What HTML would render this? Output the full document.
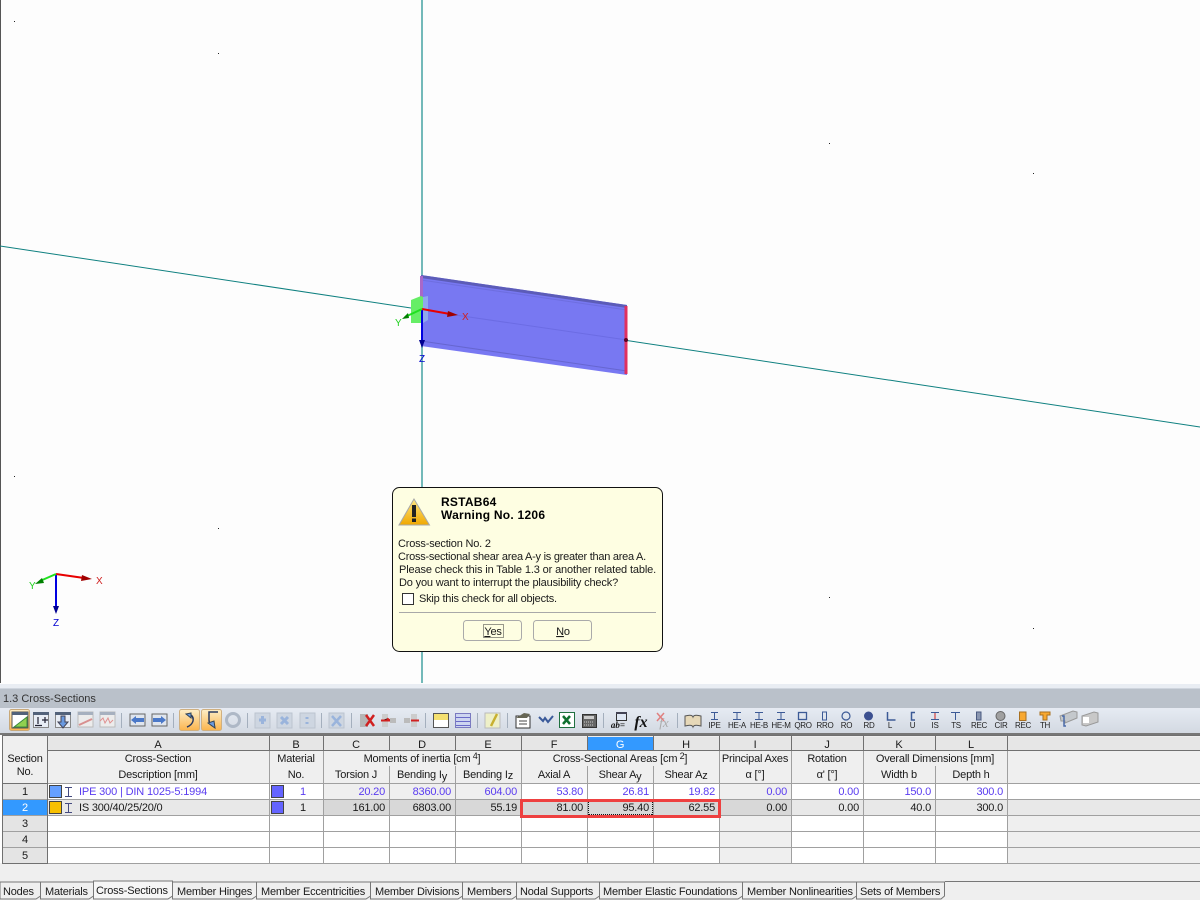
<!DOCTYPE html>
<html><head><meta charset="utf-8"><style>
html,body{margin:0;padding:0;background:#fff;width:1200px;height:900px;overflow:hidden}
svg{display:block;position:absolute;left:0;top:0}
text{font-family:"Liberation Sans",sans-serif;font-size:11px;letter-spacing:-.2px;fill:#1a1a1a}
.m{text-anchor:middle}.e{text-anchor:end}
.b{fill:#5a3cf0}
.t{font-size:8px;letter-spacing:-.3px;text-anchor:middle;fill:#222}
.tab{fill:#efefef;stroke:#777;stroke-width:1}
.ax{font-size:10px;letter-spacing:0}
</style></head><body>
<svg width="1200" height="900" viewBox="0 0 1200 900">
<defs>
<linearGradient id="tb" x1="0" y1="0" x2="0" y2="1"><stop offset="0" stop-color="#e6ebf3"/><stop offset="1" stop-color="#d3d9e2"/></linearGradient>
<linearGradient id="or" x1="0" y1="0" x2="0" y2="1"><stop offset="0" stop-color="#fdeec8"/><stop offset="1" stop-color="#fbb44c"/></linearGradient>
<linearGradient id="yl" x1="0" y1="0" x2="0" y2="1"><stop offset="0" stop-color="#ffe680"/><stop offset="1" stop-color="#f0a800"/></linearGradient>
</defs>
<!-- viewport -->
<rect width="1200" height="684" fill="#fdfdfd"/>
<rect x="0" y="0" width="1" height="683" fill="#555"/>
<line x1="422" y1="0" x2="422" y2="683" stroke="#73b9b9" stroke-width="2"/>
<line x1="0" y1="246" x2="421" y2="309.5" stroke="#0f8080" stroke-width="1"/>
<line x1="627" y1="340.500" x2="1200" y2="427" stroke="#0f8080" stroke-width="1"/>
<g fill="#222"><rect x="14" y="21" width="1" height="1"/><rect x="218" y="53" width="1" height="1"/><rect x="829" y="143" width="1" height="1"/><rect x="1033" y="173" width="1" height="1"/><rect x="14" y="476" width="1" height="1"/><rect x="218" y="528" width="1" height="1"/><rect x="829" y="597" width="1" height="1"/><rect x="1033" y="628" width="1" height="1"/></g>
<!-- beam -->
<polygon points="421,275 627,305 627,375 421,346" fill="#7878f2"/>
<polygon points="421,275 627,305 627,308 421,278" fill="#5c5cb8"/>
<line x1="421" y1="280" x2="627" y2="310" stroke="#6e6ee0"/>
<line x1="421" y1="341" x2="627" y2="371" stroke="#6666d0"/>
<line x1="421" y1="310" x2="627" y2="340" stroke="#6c6ce4"/>
<rect x="420" y="276" width="3" height="24" fill="#a868c8"/>
<rect x="624.500" y="306" width="3" height="68" fill="#e03060"/>
<circle cx="626" cy="340" r="2" fill="#600020"/>
<polygon points="423,297 428,296 428,320 423,323" fill="#8fa8f0"/>
<polygon points="411,300 421,296 423,297 423,323 411,323" fill="#66ee66"/>
<line x1="422" y1="309" x2="422" y2="342" stroke="#0000e0" stroke-width="2"/>
<polygon points="419,340 425,340 422,348" fill="#000090"/>
<line x1="422" y1="309" x2="450" y2="314" stroke="#e80000" stroke-width="2"/>
<polygon points="448,311 458,315 447,317" fill="#a00000"/>
<line x1="422" y1="309" x2="405" y2="317" stroke="#20e020" stroke-width="2"/>
<polygon points="408,313 409,318 402,319" fill="#008000"/>
<text x="462" y="320" class="ax" style="fill:#d02020">X</text>
<text x="395" y="326" class="ax" style="fill:#20d020">Y</text>
<text x="419" y="362" class="ax" style="fill:#0000d0">Z</text>
<!-- triad -->
<line x1="56" y1="574" x2="56" y2="608" stroke="#0000e0" stroke-width="2"/>
<polygon points="53,606 59,606 56,614" fill="#000090"/>
<line x1="56" y1="574" x2="84" y2="578" stroke="#e80000" stroke-width="2"/>
<polygon points="82,575 92,579 81,581" fill="#a00000"/>
<line x1="56" y1="574" x2="40" y2="581" stroke="#20e020" stroke-width="2"/>
<polygon points="42,578 44,583 35,584" fill="#008000"/>
<text x="96" y="584" class="ax" style="fill:#d02020">X</text>
<text x="29" y="589" class="ax" style="fill:#20d020">Y</text>
<text x="53" y="626" class="ax" style="fill:#0000d0">Z</text>
<!-- dialog -->
<rect x="392.500" y="487.500" width="270" height="164" rx="7" fill="#fefee2" stroke="#111"/>
<polygon points="414,499 429.500,525 399,525" fill="url(#yl)" stroke="#a8a8a8"/>
<rect x="412" y="505" width="4" height="12" fill="#222"/><rect x="412" y="518.500" width="4" height="3.500" fill="#222"/>
<text x="441" y="506" style="font-weight:bold;font-size:12px;letter-spacing:.25px;fill:#000">RSTAB64</text>
<text x="441" y="519" style="font-weight:bold;font-size:12px;letter-spacing:.25px;fill:#000">Warning No. 1206</text>
<text x="398" y="547">Cross-section No. 2</text>
<text x="398" y="560" textLength="248">Cross-sectional shear area A-y is greater than area A.</text>
<text x="399" y="573" textLength="257">Please check this in Table 1.3 or another related table.</text>
<text x="399" y="586" textLength="219">Do you want to interrupt the plausibility check?</text>
<rect x="402.500" y="593.500" width="11" height="11" fill="#fff" stroke="#333"/>
<text x="419" y="602">Skip this check for all objects.</text>
<line x1="399" y1="612.500" x2="656" y2="612.500" stroke="#a8a8a8"/>
<rect x="463.500" y="620.500" width="58" height="20" rx="3" fill="#fefee2" stroke="#aaa"/>
<rect x="533.500" y="620.500" width="58" height="20" rx="3" fill="#fefee2" stroke="#aaa"/>
<rect x="483.500" y="624.500" width="20" height="13" fill="none" stroke="#333" stroke-dasharray="1 1"/>
<text x="493" y="635" class="m"><tspan text-decoration="underline">Y</tspan>es</text>
<text x="563" y="635" class="m"><tspan text-decoration="underline">N</tspan>o</text>
<!-- panel -->
<rect y="684" width="1200" height="216" fill="#efefef"/>
<rect y="684" width="1200" height="4" fill="#e9edf3"/>
<rect y="688" width="1200" height="1" fill="#cfd5de"/>
<rect y="689" width="1200" height="19" fill="#bac1ca"/>
<text x="3" y="702" style="fill:#333;letter-spacing:0">1.3 Cross-Sections</text>
<rect y="708" width="1200" height="25" fill="url(#tb)"/>
<rect y="733" width="1200" height="2" fill="#777"/>
<!-- toolbar icons -->
<g stroke="#a4afbd" fill="none">
<line x1="121.500" y1="713" x2="121.500" y2="728"/><line x1="173.500" y1="713" x2="173.500" y2="728"/><line x1="247.500" y1="713" x2="247.500" y2="728"/>
<line x1="321.500" y1="713" x2="321.500" y2="728"/><line x1="351.500" y1="713" x2="351.500" y2="728"/><line x1="425.500" y1="713" x2="425.500" y2="728"/><line x1="477.500" y1="713" x2="477.500" y2="728"/><line x1="507.500" y1="713" x2="507.500" y2="728"/><line x1="603.500" y1="713" x2="603.500" y2="728"/><line x1="677.500" y1="713" x2="677.500" y2="728"/>
</g>
<rect x="9.500" y="709.500" width="20" height="21" rx="2" fill="url(#or)" stroke="#c8a878"/>
<rect x="12" y="712" width="16" height="16" fill="#fff" stroke="#555"/><rect x="12" y="712" width="16" height="3" fill="#52627a"/><polygon points="14,727 27,717 27,727" fill="#90d050" stroke="#3a8a3a"/>
<rect x="33.500" y="712.500" width="15" height="15" fill="#e8edf5" stroke="#888"/><rect x="33" y="712" width="16" height="3" fill="#52627a"/><path d="M38 717v7M35 725.500h7M42 720h6M45 717v6" stroke="#223" stroke-width="1.200" fill="none"/>
<rect x="55.500" y="712.500" width="15" height="15" fill="#e8edf5" stroke="#888"/><rect x="55" y="712" width="16" height="3" fill="#52627a"/><path d="M61 716h4v6h3l-5 6-5-6h3z" fill="#6a9ae0" stroke="#445"/>
<rect x="78" y="712" width="15" height="15" fill="#ececec" stroke="#bbb"/><rect x="78" y="712" width="15" height="3" fill="#a6b0bf"/><path d="M79 725l13-6" stroke="#d89090" stroke-width="2"/>
<rect x="100" y="712" width="15" height="15" fill="#ececec" stroke="#bbb"/><rect x="100" y="712" width="15" height="3" fill="#a6b0bf"/><path d="M100 721l3-3 2 5 3-5 2 5 3-3" stroke="#e09090" fill="none"/>
<rect x="130" y="714" width="15" height="12" fill="#dfe5ee" stroke="#666"/><path d="M131 720l5-4v2h8v4h-8v2z" fill="#4a78c8"/>
<rect x="152" y="714" width="15" height="12" fill="#dfe5ee" stroke="#666"/><path d="M166 720l-5-4v2h-8v4h8v2z" fill="#4a78c8"/>
<rect x="179.500" y="709.500" width="20" height="21" rx="2" fill="url(#or)" stroke="#d0b080"/>
<rect x="201.500" y="709.500" width="20" height="21" rx="2" fill="url(#or)" stroke="#d0b080"/>
<path d="M189 714q5 2 4 7q-1 4-6 6" stroke="#2a3a60" stroke-width="1.500" fill="none"/><path d="M186 714l5-1v5z" fill="#6a9ae0" stroke="#345"/>
<path d="M218 712h-9v8q0 5 6 7" stroke="#2a3a60" stroke-width="1.500" fill="none"/><path d="M208 723l7 5-1-7z" fill="#6a9ae0" stroke="#345"/>
<circle cx="233" cy="720" r="6.500" fill="none" stroke="#aeb8c6" stroke-width="3"/>
<g fill="#ced6e1" stroke="#bcc4cf"><rect x="255" y="713" width="15" height="15"/><rect x="277" y="713" width="15" height="15"/><rect x="300" y="713" width="15" height="15"/><rect x="329" y="713" width="15" height="15"/></g>
<path d="M259 720h7M262.500 716v8" stroke="#9ab4dc" stroke-width="3"/><path d="M281 717l7 7M288 717l-7 7" stroke="#9ab4dc" stroke-width="3"/><path d="M307 717v2M307 722v2" stroke="#9ab4dc" stroke-width="3"/><path d="M332 716l9 10M341 716l-9 10" stroke="#9ab4dc" stroke-width="2.500"/>
<rect x="360" y="714" width="8" height="13" fill="#b5b5b5"/><path d="M366 715l8 11M374 715l-8 11" stroke="#d02020" stroke-width="2.500"/>
<rect x="382" y="714" width="6" height="13" fill="#ccc"/><path d="M381 720.500h9l-3-2M381 720.500l0 0" stroke="#d02020" stroke-width="2"/><rect x="390" y="718" width="6" height="5" fill="#bbb"/>
<rect x="404" y="718" width="6" height="5" fill="#bbb"/><rect x="411" y="714" width="6" height="13" fill="#ccc"/><path d="M411 720.500h8" stroke="#d02020" stroke-width="2"/>
<rect x="433.500" y="713.500" width="15" height="14" fill="#fff" stroke="#555"/><rect x="434" y="714" width="14" height="6" fill="#f4e070"/>
<rect x="455.500" y="713.500" width="15" height="14" fill="#cdd5f0" stroke="#7a7ac0"/><path d="M456 717.500h14M456 721.500h14M456 725.500h14" stroke="#6a6ac8"/>
<rect x="485" y="713" width="15" height="15" fill="#eef0c8" stroke="#bbb"/><path d="M491 726l6-12" stroke="#c8b030" stroke-width="2.500"/>
<rect x="516" y="716" width="14" height="12" fill="#fff" stroke="#333"/><path d="M516 718l8-5 6 1-3 4z" fill="#665"/><path d="M519 721h8M519 724h8" stroke="#444"/>
<path d="M539 717l4 4 2-3 3 4 5-6" stroke="#3a5a9a" stroke-width="2" fill="none"/>
<rect x="559.500" y="712.500" width="15" height="15" fill="#fff" stroke="#207040"/><path d="M563 716l7 8M570 716l-7 8" stroke="#107030" stroke-width="2.500"/>
<rect x="582.500" y="714.500" width="14" height="13" fill="#666" stroke="#333"/><rect x="584" y="716" width="10" height="3" fill="#ccc"/><path d="M584 722h10M584 725h10" stroke="#ccc" stroke-dasharray="1 1"/>
<rect x="616.500" y="712.500" width="10" height="8" fill="#e0e8f4" stroke="#333"/><rect x="616" y="712" width="11" height="2" fill="#445"/>
<text x="618" y="728" style="font:italic bold 9px 'Liberation Serif',serif;fill:#111;letter-spacing:0" text-anchor="middle">ab=</text>
<text x="641" y="727" style="font:italic bold 16px 'Liberation Serif',serif;fill:#111;letter-spacing:0" text-anchor="middle">fx</text>
<text x="664" y="727" style="font:italic 13px 'Liberation Serif',serif;fill:#aaa;letter-spacing:0" text-anchor="middle">fx</text>
<path d="M657 713l7 8M664 713l-7 8" stroke="#e08080" stroke-width="1.500"/>
<path d="M685 716q7-2 8 1q1-3 8-1v10q-7-2-8 1q-1-3-8-1z" fill="#e6d8b8" stroke="#555"/>
<g stroke="#3c5a96" fill="none" stroke-width="1">
<path d="M711 712.500h7M714.500 712v8M711 719.500h7M733 712.500h8M737 712v8M733 719.500h8M755 712.500h8M759 712v8M755 719.500h8M777 712.500h8M781 712v8M777 719.500h8"/>
<rect x="798.500" y="712.500" width="8" height="7" stroke-width="1.300"/><rect x="822.500" y="712" width="4" height="8"/><circle cx="846" cy="716" r="4" stroke-width="1.200"/>
<path d="M887.500 712v8h8M915 712.500h-3.500v7.500h3.500" stroke-width="1.500"/><path d="M951 712.500h9M955.500 712v8"/>
</g>
<path d="M931 712.500h8M931 719.500h8" stroke="#3c5a96"/><path d="M935 713v6" stroke="#d02020"/>
<circle cx="868.500" cy="716" r="4.500" fill="#3c5090"/>
<rect x="976.500" y="712" width="4.500" height="8" fill="#8a96b0" stroke="#4a5a80"/>
<circle cx="1000.500" cy="716" r="4.500" fill="#a0a0a0" stroke="#666"/>
<rect x="1019.500" y="712" width="6.500" height="8.500" fill="#f8a830" stroke="#a87020"/>
<path d="M1040 712h10v3h-3v5h-4v-5h-3z" fill="#f8a830" stroke="#a87020"/>
<path d="M1060 716l13-5 4 1v6l-12 5v-2h-4z" fill="#c4c8cc" stroke="#999"/><path d="M1062 716h2v10h2" stroke="#4a6aa8" fill="none" stroke-width="1.500"/>
<path d="M1082 716l12-4 4 1v9l-12 4-4-1z" fill="#c8c8c8" stroke="#999"/><rect x="1083" y="717" width="6" height="6" fill="#fff"/>
<text class="t" x="714.500" y="728">IPE</text><text class="t" x="737" y="728">HE-A</text><text class="t" x="759" y="728">HE-B</text><text class="t" x="781" y="728">HE-M</text><text class="t" x="803" y="728">QRO</text><text class="t" x="825" y="728">RRO</text><text class="t" x="846.500" y="728">RO</text><text class="t" x="869" y="728">RD</text><text class="t" x="890" y="728">L</text><text class="t" x="912.500" y="728">U</text><text class="t" x="935" y="728">IS</text><text class="t" x="956" y="728">TS</text><text class="t" x="979" y="728">REC</text><text class="t" x="1001" y="728">CIR</text><text class="t" x="1023" y="728">REC</text><text class="t" x="1045" y="728">TH</text>
<!-- table backgrounds -->
<rect x="0" y="735" width="1200" height="128" fill="#fff"/>
<rect x="2" y="736" width="1198" height="47" fill="#efefef"/>
<rect x="48" y="737" width="1152" height="13" fill="#e6e6e6"/>
<rect x="323" y="783" width="198" height="16" fill="#efefef"/>
<rect x="719" y="783" width="72" height="16" fill="#efefef"/>
<rect x="48" y="799" width="1152" height="16" fill="#e8e8e8"/>
<rect x="323" y="799" width="468" height="16" fill="#d8d8d8"/>
<rect x="719" y="815" width="72" height="48" fill="#efefef"/>
<rect x="1007" y="815" width="193" height="48" fill="#efefef"/>
<rect x="588" y="737" width="65" height="13" fill="#3399ff"/>
<!-- row headers -->
<g fill="#e4e4e4"><rect x="3" y="783" width="44" height="16"/><rect x="3" y="815" width="44" height="16"/><rect x="3" y="831" width="44" height="16"/><rect x="3" y="847" width="44" height="16"/></g>
<rect x="3" y="799" width="44" height="16" fill="#3399ff"/>
<!-- grid -->
<g stroke="#a0a0a0">
<path d="M48 799.500H1200M48 815.500H1200M48 831.500H1200M48 847.500H1200M48 863.500H1200M48 783.500H1200"/>
<path d="M269.500 750V863M323.500 750V863M389.500 766V863M455.500 766V863M521.500 750V863M587.500 766V863M653.500 766V863M719.500 750V863M791.500 750V863M863.500 750V863M935.500 766V863M1007.500 750V863"/>
<path d="M3 799.500H47M3 815.500H47M3 831.500H47M3 847.500H47"/>
</g>
<g stroke="#707070"><path d="M2 735.500H1200M48 750.500H1200M47.500 736V863M2.500 736V863M2 783.500H48M2 863.500H48"/>
<path d="M269.500 736V750M323.500 736V750M389.500 736V750M455.500 736V750M521.500 736V750M587.500 736V750M653.500 736V750M719.500 736V750M791.500 736V750M863.500 736V750M935.500 736V750M1007.500 736V750"/></g>
<!-- letters and headers -->
<text x="158" y="748" class="m">A</text><text x="296" y="748" class="m">B</text><text x="356" y="748" class="m">C</text><text x="422" y="748" class="m">D</text><text x="488" y="748" class="m">E</text><text x="554" y="748" class="m">F</text><text x="620" y="748" class="m" style="fill:#fff">G</text><text x="686" y="748" class="m">H</text><text x="755" y="748" class="m">I</text><text x="827" y="748" class="m">J</text><text x="899" y="748" class="m">K</text><text x="971" y="748" class="m">L</text>
<text x="25" y="762" class="m">Section</text><text x="25" y="775" class="m">No.</text>
<text x="158" y="762" class="m">Cross-Section</text><text x="158" y="778" class="m">Description [mm]</text>
<text x="296" y="762" class="m">Material</text><text x="296" y="778" class="m">No.</text>
<text x="422" y="762" class="m">Moments of inertia [cm<tspan dy="-3" style="font-size:9px"> 4</tspan><tspan dy="3">]</tspan></text>
<text x="620" y="762" class="m">Cross-Sectional Areas [cm<tspan dy="-3" style="font-size:9px"> 2</tspan><tspan dy="3">]</tspan></text>
<text x="755" y="762" class="m">Principal Axes</text><text x="755" y="778" class="m">α [°]</text>
<text x="827" y="762" class="m">Rotation</text><text x="827" y="778" class="m">α' [°]</text>
<text x="935" y="762" class="m">Overall Dimensions [mm]</text>
<text x="356" y="778" class="m">Torsion J</text>
<text x="422" y="778" class="m">Bending I<tspan dy="2">y</tspan></text>
<text x="488" y="778" class="m">Bending I<tspan dy="1">z</tspan></text>
<text x="554" y="778" class="m">Axial A</text>
<text x="620" y="778" class="m">Shear A<tspan dy="2">y</tspan></text>
<text x="686" y="778" class="m">Shear A<tspan dy="1">z</tspan></text>
<text x="899" y="778" class="m">Width b</text><text x="971" y="778" class="m">Depth h</text>
<text x="25" y="795" class="m">1</text><text x="25" y="811" class="m" style="fill:#fff">2</text><text x="25" y="827" class="m">3</text><text x="25" y="843" class="m">4</text><text x="25" y="859" class="m">5</text>
<!-- row 1 -->
<rect x="49.500" y="785.500" width="12" height="12" fill="#66a0ff" stroke="#444"/>
<path d="M65 787.500h7M68.500 787.500v9M65 796.500h7" stroke="#444a80" fill="none"/>
<text x="79" y="795" class="b" textLength="128">IPE 300 | DIN 1025-5:1994</text>
<rect x="271.500" y="785.500" width="12" height="12" fill="#6464ff" stroke="#444"/>
<text x="303" y="795" class="m b">1</text>
<text class="e b" x="385" y="795">20.20</text><text class="e b" x="451" y="795">8360.00</text><text class="e b" x="517" y="795">604.00</text><text class="e b" x="583" y="795">53.80</text><text class="e b" x="649" y="795">26.81</text><text class="e b" x="715" y="795">19.82</text><text class="e b" x="787" y="795">0.00</text><text class="e b" x="859" y="795">0.00</text><text class="e b" x="931" y="795">150.0</text><text class="e b" x="1003" y="795">300.0</text>
<!-- row 2 -->
<rect x="49.500" y="801.500" width="12" height="12" fill="#f8c000" stroke="#444"/>
<path d="M65 803.500h7M68.500 803.500v9M65 812.500h7" stroke="#444a80" fill="none"/>
<text x="79" y="811">IS 300/40/25/20/0</text>
<rect x="271.500" y="801.500" width="12" height="12" fill="#6464ff" stroke="#444"/>
<text x="303" y="811" class="m">1</text>
<text class="e" x="385" y="811">161.00</text><text class="e" x="451" y="811">6803.00</text><text class="e" x="517" y="811">55.19</text><text class="e" x="583" y="811">81.00</text><text class="e" x="649" y="811">95.40</text><text class="e" x="715" y="811">62.55</text><text class="e" x="787" y="811">0.00</text><text class="e" x="859" y="811">0.00</text><text class="e" x="931" y="811">40.0</text><text class="e" x="1003" y="811">300.0</text>
<path d="M588.500 802v13M652.500 802v13M589 814.500h63" fill="none" stroke="#111" stroke-dasharray="1 1"/>
<rect x="521.500" y="800.500" width="198" height="16" fill="none" stroke="#ee4040" stroke-width="3"/>
<!-- tabs -->
<path class="tab" d="M856.500 882V899H941l3.500-3V882z"/>
<path class="tab" d="M742.500 882V899H852l4.500-3V882z"/>
<path class="tab" d="M599.500 882V899H738l4.500-3V882z"/>
<path class="tab" d="M516.500 882V899H595l4.500-3V882z"/>
<path class="tab" d="M462.500 882V899H512l4.500-3V882z"/>
<path class="tab" d="M370.500 882V899H458l4.500-3V882z"/>
<path class="tab" d="M256.500 882V899H366l4.500-3V882z"/>
<path class="tab" d="M172.500 882V899H252l4.500-3V882z"/>
<path class="tab" d="M40.500 882V899H89l4.500-3V882z"/>
<path class="tab" d="M0 882V899H36l4.500-3V882z"/>
<rect x="945" y="881" width="255" height="1" fill="#777"/>
<path d="M93.500 881V899H168l4.500-3V881z" fill="#f6f6f6" stroke="#777"/>
<text x="3" y="895">Nodes</text><text x="45" y="895">Materials</text><text x="96" y="894">Cross-Sections</text><text x="177" y="895">Member Hinges</text><text x="261" y="895">Member Eccentricities</text><text x="375" y="895">Member Divisions</text><text x="467" y="895">Members</text><text x="520" y="895">Nodal Supports</text><text x="603" y="895">Member Elastic Foundations</text><text x="747" y="895">Member Nonlinearities</text><text x="860" y="895">Sets of Members</text>
</svg>
</body></html>
